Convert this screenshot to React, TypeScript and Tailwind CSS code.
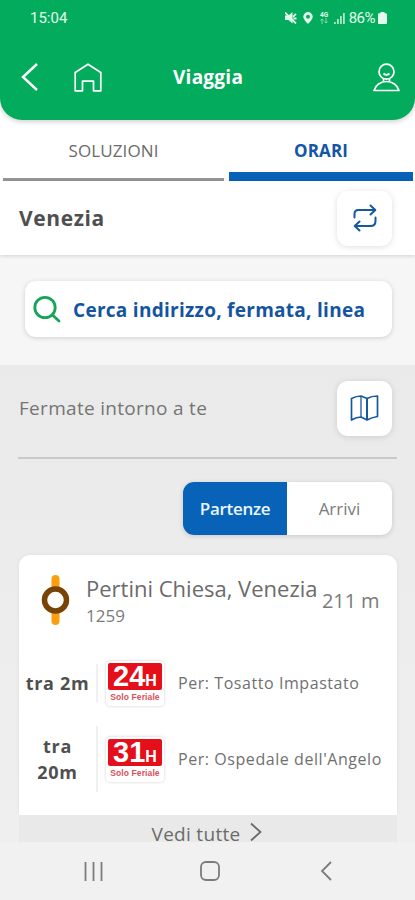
import React, { useState } from 'react';
import { clsx } from 'clsx';

interface Departure {
  line: string;
  wait: string;
  direction: string;
}

const departures: Departure[] = [
  { line: '24', wait: 'tra 2m', direction: 'Tosatto Impastato' },
  { line: '31', wait: 'tra 20m', direction: "Ospedale dell'Angelo" },
];

const StatusBar = () => (
  <div className="flex h-[35px] items-center pl-[30px] pr-[28px] font-['Roboto',sans-serif] text-[#e3fbec]">
    <span className="pt-[2px] text-[15px]">15:04</span>
    <div className="ml-auto flex items-center">
      <svg width="12" height="12" viewBox="0 0 12 12" className="mr-[6px]">
        <path d="M0 3.500h3.500L7.500 0v11.500L3.500 8H0z" fill="currentColor" />
        <path d="M0 .5 11 11.500M8 4.800l3-3M8.500 6.500h3" stroke="currentColor" strokeWidth="1.800" />
      </svg>
      <svg width="10" height="12" viewBox="0 0 10 12" className="mr-[7px]">
        <path
          d="M5 0a4.700 4.700 0 0 0-4.700 4.700C.3 7.600 5 12 5 12s4.700-4.400 4.700-7.300A4.700 4.700 0 0 0 5 0Zm0 2.800a2 2 0 1 1 0 4 2 2 0 0 1 0-4Z"
          fill="currentColor"
          fillRule="evenodd"
        />
      </svg>
      <div className="mr-[5px] flex w-[9px] flex-col items-center">
        <span className="text-[6.5px] font-bold leading-[6px]">4G</span>
        <svg width="8" height="6" viewBox="0 0 8 6" stroke="currentColor" strokeWidth="0.9" fill="none" opacity="0.65">
          <path d="M2 6V1M.5 2.500 2 1l1.500 1.500M6 0v5M4.500 3.500 6 5l1.500-1.500" />
        </svg>
      </div>
      <svg width="11" height="12" viewBox="0 0 11 12" className="mr-[4px]" fill="currentColor">
        <path d="M0 10h1.800v2H0zM3 7h1.800v5H3zM6 4h1.800v8H6zM9 1h1.800v11H9z" opacity="0.75" />
      </svg>
      <span className="text-[15px] leading-[18px] tracking-[-0.5px]">86%</span>
      <svg width="9" height="12" viewBox="0 0 9 12" className="ml-[3px]" fill="currentColor">
        <path d="M2.500 0h4v1.300H8q1 0 1 1V11q0 1-1 1H1q-1 0-1-1V2.300q0-1 1-1h1.500z" />
      </svg>
    </div>
  </div>
);

const Header = () => (
  <header className="h-[120px] rounded-b-[22px] bg-[#03ac5c] text-white shadow-[0_2px_5px_rgba(0,0,0,0.18)]">
    <StatusBar />
    <div className="flex h-[84px] items-center pl-[21px] pr-[15px]">
      <svg width="17" height="28" viewBox="0 0 17 28" fill="none" stroke="currentColor" strokeWidth="2.400">
        <path d="M16 1 2 14l14 13" />
      </svg>
      <svg
        width="28"
        height="29"
        viewBox="0 0 28 29"
        fill="none"
        stroke="currentColor"
        strokeWidth="1.700"
        strokeLinejoin="round"
        className="ml-[36px]"
      >
        <path d="M1.200 9.500 14 1.200 26.800 9.500v18.300H19.500v-9.600h-11v9.600H1.200z" />
      </svg>
      <h1 className="ml-[71px] w-[74px] whitespace-nowrap text-[19px] font-bold leading-7 tracking-[0.25px]">Viaggia</h1>
      <svg width="27" height="29" viewBox="0 0 27 29" fill="none" stroke="currentColor" strokeWidth="1.700" className="ml-auto">
        <circle cx="13.500" cy="8.700" r="7.500" />
        <path d="M10.500 10.500q3 2.600 6 0M10.500 16v2.500M16.500 16v2.500" />
        <path d="M1 27.500h25c-1.500-5.500-6.500-9-12.500-9S2.500 22 1 27.500Z" strokeLinejoin="round" />
      </svg>
    </div>
  </header>
);

const Tabs = () => (
  <div className="flex h-[61px] items-end gap-[5px] pl-[3px] pr-[2px] text-[17px]">
    <button className="h-full w-[221px] border-b-[3px] border-[#969696] pt-[3px] text-[#6b6b6b]">
      <span className="block tracking-[0.1px]">SOLUZIONI</span>
    </button>
    <button className="h-full w-[184px] border-b-[9px] border-[#0862b7] pt-[9px] font-bold text-[#1356a5]">
      <span className="block tracking-[0.15px]">ORARI</span>
    </button>
  </div>
);

interface SquareButtonProps {
  label: string;
  children: React.ReactNode;
}

const SquareButton = ({ label, children }: SquareButtonProps) => (
  <button
    aria-label={label}
    className="flex size-[55px] items-center justify-center rounded-[11px] bg-white text-[#14599f] shadow-[0_1px_6px_rgba(0,0,0,0.13)]"
  >
    {children}
  </button>
);

const LineBadge = ({ line }: { line: string }) => (
  <div className="flex h-[45px] w-[58px] flex-col items-center rounded-[4px] bg-white px-[2px] pt-[2px] font-['Liberation_Sans',sans-serif] font-bold shadow-[0_0_3px_rgba(0,0,0,0.2)]">
    <div className="flex h-[27px] w-full items-baseline justify-center rounded-[2px] bg-[#e50f1b] leading-[27px] text-white">
      <span className="text-[29px]">{line}</span>
      <span className="text-[16px]">H</span>
    </div>
    <span className="mt-[2px] whitespace-nowrap text-[8.5px] leading-[11px] tracking-[0.1px] text-[#d9505c]">Solo Feriale</span>
  </div>
);

const DepartureRow = ({ line, wait, direction }: Departure) => (
  <div className="flex h-[76px] items-center">
    <div className="w-[77px] px-[4px] text-center text-[18px] font-bold leading-[26px] tracking-[0.7px] text-[#4f4f4f]">{wait}</div>
    <div className={clsx('w-[2px] bg-[#f0f0f0]', line === '24' ? 'h-[38px]' : 'h-[66px]')} />
    <div className="ml-[8px]">
      <LineBadge line={line} />
    </div>
    <span className="ml-[14px] whitespace-nowrap text-[16px] tracking-[0.56px] text-[#707070]">Per: {direction}</span>
  </div>
);

const App = () => {
  const [mode, setMode] = useState<'partenze' | 'arrivi'>('partenze');

  return (
    <div className="flex h-[900px] w-[415px] flex-col overflow-hidden bg-white font-['Open_Sans','Noto_Sans',sans-serif]">
      <Header />
      <Tabs />

      <div className="z-10 flex h-[74px] shrink-0 items-center justify-between bg-white pl-[19px] pr-[23px] shadow-[0_1px_4px_rgba(0,0,0,0.15)]">
        <span className="pt-[2px] text-[21px] font-bold tracking-[0.6px] text-[#4f4f4f]">Venezia</span>
        <SquareButton label="Cambia">
          <svg
            width="24"
            height="28"
            viewBox="0 0 24 28"
            fill="none"
            stroke="currentColor"
            strokeWidth="2"
            strokeLinecap="round"
            strokeLinejoin="round"
          >
            <path d="M1.500 13.500V10q0-4 4-4h16M17.500 1.500 22.300 6l-4.800 4.500" />
            <path d="M22.500 13.500V17q0 5-5 5H2M6.500 17.500 1.700 22l4.800 4.500" />
          </svg>
        </SquareButton>
      </div>

      <div className="h-[110px] shrink-0 bg-[#f6f6f6] pl-[25px] pr-[23px] pt-[26px]">
        <div className="flex h-[56px] items-center rounded-[11px] bg-white pl-[8px] shadow-[0_1px_5px_rgba(0,0,0,0.16)]">
          <svg width="29" height="28" viewBox="0 0 29 28" fill="none" stroke="#17a457" strokeWidth="2.800" strokeLinecap="round">
            <circle cx="12" cy="12.500" r="10.200" />
            <path d="m19.500 20 6.500 6" />
          </svg>
          <span className="ml-[11px] whitespace-nowrap pt-[2px] text-[19px] font-bold tracking-[0.28px] text-[#1454a1]">
            Cerca indirizzo, fermata, linea
          </span>
        </div>
      </div>

      <div className="flex h-[477px] shrink-0 flex-col bg-linear-to-b from-[#eaeaea] to-[#efefef] px-[18px]">
        <div className="flex h-[94px] shrink-0 items-center justify-between border-b-2 border-[#c9c9c9] pb-[6px] pl-px pr-[5px]">
          <span className="text-[19px] tracking-[0.3px] text-[#757575]">Fermate intorno a te</span>
          <SquareButton label="Mappa">
            <svg width="29" height="26" viewBox="0 0 29 26" fill="none" stroke="currentColor" strokeWidth="1.700" strokeLinejoin="round">
              <path d="M1.500 3.500q5-2.500 9.500-2.500l6 2.500q4.500-2.500 10.500-2.500v20.500q-6 1-10.500 3.500l-6-3q-4.500 0-9.500 3z" />
              <path d="M17 3.500V25" strokeWidth="2" />
              <path d="M11 1v21" strokeWidth="2" opacity="0.65" />
            </svg>
          </SquareButton>
        </div>

        <div className="mr-[5px] mt-[23px] flex h-[53px] w-[209px] shrink-0 self-end overflow-hidden rounded-[11px] bg-white text-[17px] shadow-[0_1px_5px_rgba(0,0,0,0.16)]">
          <button
            onClick={() => setMode('partenze')}
            className={clsx('w-[104px] tracking-[-0.3px]', mode === 'partenze' ? 'bg-[#0862b7] font-semibold text-[#eaf6ff]' : 'text-[#7b7b7b]')}
          >
            Partenze
          </button>
          <button
            onClick={() => setMode('arrivi')}
            className={clsx('flex-1', mode === 'arrivi' ? 'bg-[#0862b7] font-semibold text-[#eaf6ff]' : 'text-[#7b7b7b]')}
          >
            Arrivi
          </button>
        </div>

        <div className="ml-px mt-[20px] h-[260px] shrink-0 rounded-t-[11px] bg-white shadow-[0_0_4px_rgba(0,0,0,0.06)]">
          <div className="flex h-[90px] items-center pl-[22px]">
            <svg width="29" height="50" viewBox="0 0 29 50">
              <path d="M14.500 4v42" stroke="#fb9f0d" strokeWidth="8" strokeLinecap="round" />
              <circle cx="14.500" cy="25" r="11" fill="#fff" stroke="#784305" strokeWidth="5.500" />
            </svg>
            <div className="ml-[16px] w-[231px] whitespace-nowrap pt-[2px]">
              <div className="text-[22px] leading-[28px] text-[#6b6b6b]">Pertini Chiesa, Venezia</div>
              <div className="text-[17px] leading-[27px] text-[#7b7b7b]">1259</div>
            </div>
            <span className="ml-[5px] whitespace-nowrap pt-[2px] text-[20px] tracking-[-0.1px] text-[#7b7b7b]">211 m</span>
          </div>
          {departures.map((d) => (
            <DepartureRow key={d.line} {...d} />
          ))}
        </div>

        <div className="ml-px flex h-[27px] shrink-0 items-start justify-center bg-[#e9e9e9] pt-[7px] text-[#6b6b6b]">
          <span className="text-[19px] leading-[24px] tracking-[0.3px]">Vedi tutte</span>
          <svg width="12" height="20" viewBox="0 0 12 20" fill="none" stroke="currentColor" strokeWidth="1.800" className="ml-[9px] mr-[3px]">
            <path d="m1 1.500 9.500 8.500L1 18.500" />
          </svg>
        </div>
      </div>

      <nav className="z-10 flex h-[58px] shrink-0 items-center bg-[#f1f1f1] pl-[84px] text-[#7c7c7c]">
        <svg width="19" height="19" viewBox="0 0 19 19" stroke="currentColor" strokeWidth="1.800">
          <path d="M1.500 0v19M9.500 0v19M17.500 0v19" />
        </svg>
        <svg width="20" height="20" viewBox="0 0 20 20" fill="none" stroke="currentColor" strokeWidth="1.800" className="ml-[97px]">
          <rect x="1" y="1" width="18" height="18" rx="5" />
        </svg>
        <svg width="12" height="20" viewBox="0 0 12 20" fill="none" stroke="currentColor" strokeWidth="1.800" className="ml-[100px]">
          <path d="M11 1 2 10l9 9" />
        </svg>
      </nav>
    </div>
  );
};

export default App;
